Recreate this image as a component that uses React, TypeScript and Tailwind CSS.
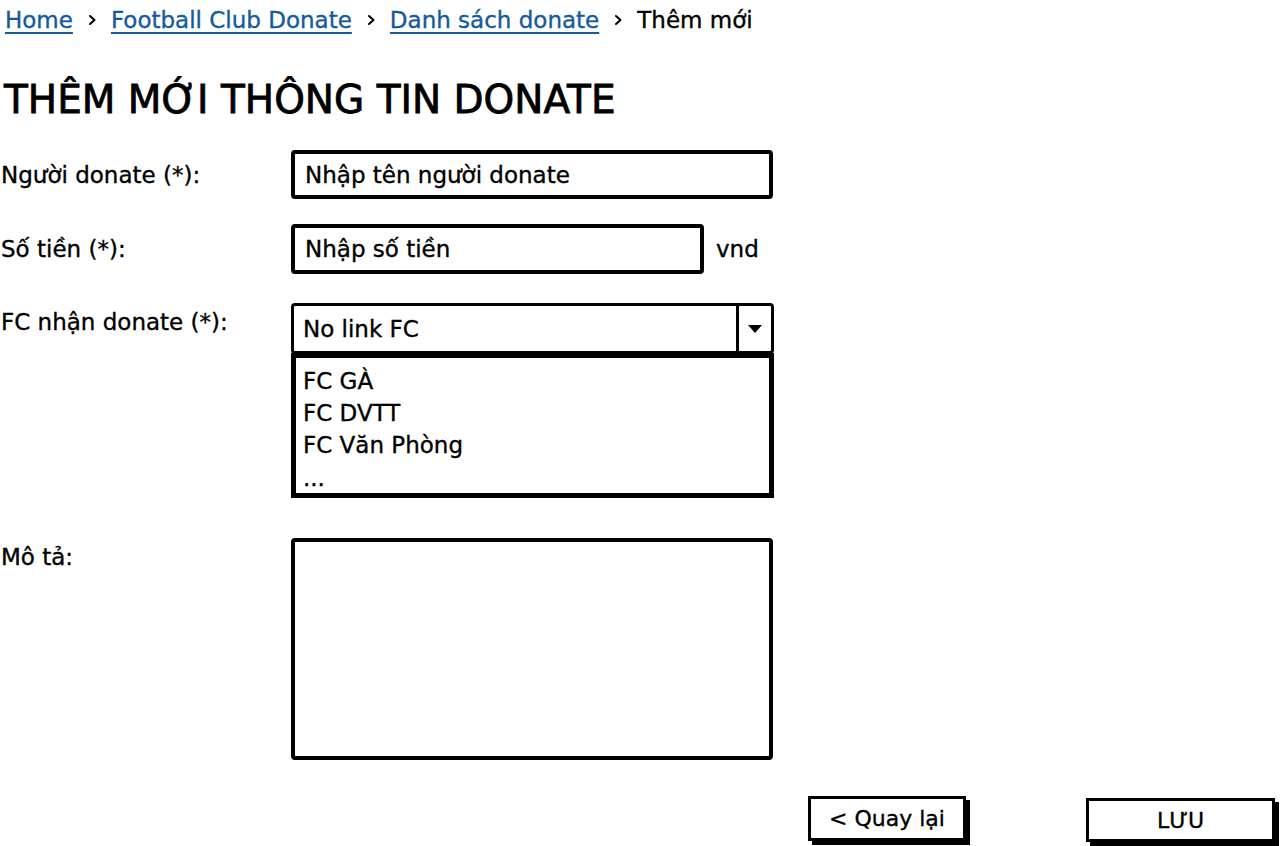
import React from "react";

const font = { fontFamily: '"DejaVu Sans", "Noto Sans", sans-serif' };

function Chevron() {
  return (
    <svg width="10" height="14" viewBox="0 0 10 14" className="mx-[14px]">
      <path d="M3 3 L7.5 7 L3 11" fill="none" stroke="#000" strokeWidth="2" strokeLinecap="round" strokeLinejoin="round" />
    </svg>
  );
}

export default function App() {
  return (
    <div className="w-[1282px] h-[846px] bg-white text-black overflow-hidden relative [-webkit-text-stroke:0.35px_currentColor]" style={font}>
      {/* breadcrumb */}
      <div className="flex items-center h-[40px] pl-[5px] text-[23px] leading-[28px]">
        <a className="text-[#155a9c] underline underline-offset-[4px] decoration-2">Home</a>
        <Chevron />
        <a className="text-[#155a9c] underline underline-offset-[4px] decoration-2">Football Club Donate</a>
        <Chevron />
        <a className="text-[#155a9c] underline underline-offset-[4px] decoration-2">Danh sách donate</a>
        <Chevron />
        <span>Thêm mới</span>
      </div>

      {/* title */}
      <h1 className="mt-[37px] pl-[4px] text-[39px] leading-[46px] [-webkit-text-stroke:0.8px_currentColor]">
        THÊM MỚI THÔNG TIN DONATE
      </h1>

      {/* form */}
      <div className="flex flex-col mt-[27px] text-[23px] leading-[28px]">
        <div className="flex items-center">
          <div className="w-[291px] pl-[1px]">Người donate (*):</div>
          <div className="w-[482px] h-[49px] border-[4px] border-black rounded-[4px] flex items-center pl-[10px]">
            Nhập tên người donate
          </div>
        </div>

        <div className="flex items-center mt-[25px]">
          <div className="w-[291px] pl-[1px]">Số tiền (*):</div>
          <div className="w-[413px] h-[50px] border-[4px] border-black rounded-[4px] flex items-center pl-[10px]">
            Nhập số tiền
          </div>
          <div className="ml-[12px]">vnd</div>
        </div>

        <div className="flex mt-[29px]">
          <div className="w-[291px] pl-[1px] pt-[5px]">FC nhận donate (*):</div>
          <div className="flex flex-col w-[483px]">
            <div className="h-[51px] border-[3px] border-black rounded-[4px] flex">
              <div className="flex-1 flex items-center pl-[9px]">No link FC</div>
              <div className="w-[35px] border-l-[3px] border-black flex items-center justify-center">
                <svg width="16" height="10" viewBox="0 0 16 10">
                  <path d="M1 1 L15 1 L8 9 Z" fill="#000" />
                </svg>
              </div>
            </div>
            <div className="h-[145px] -mt-[1px] border-[5px] border-black flex flex-col pl-[7px] pt-[7px] leading-[32px]">
              <div>FC GÀ</div>
              <div>FC DVTT</div>
              <div>FC Văn Phòng</div>
              <div className="leading-[34px]">...</div>
            </div>
          </div>
        </div>

        <div className="flex mt-[40px]">
          <div className="w-[291px] pl-[1px] pt-[5px]">Mô tả:</div>
          <div className="w-[482px] h-[222px] border-[4px] border-black rounded-[4px]" />
        </div>
      </div>

      {/* buttons */}
      <div className="flex mt-[36px] text-[22px]">
        <div className="ml-[808px] w-[158px] h-[45px] border-[3px] border-black bg-white flex items-center justify-center shadow-[4px_4px_0_0_#000]">
          &lt; Quay lại
        </div>
        <div className="ml-[120px] w-[189px] h-[44px] mt-[2px] border-[3px] border-black bg-white flex items-center justify-center shadow-[4px_4px_0_0_#000]">
          LƯU
        </div>
      </div>
    </div>
  );
}
